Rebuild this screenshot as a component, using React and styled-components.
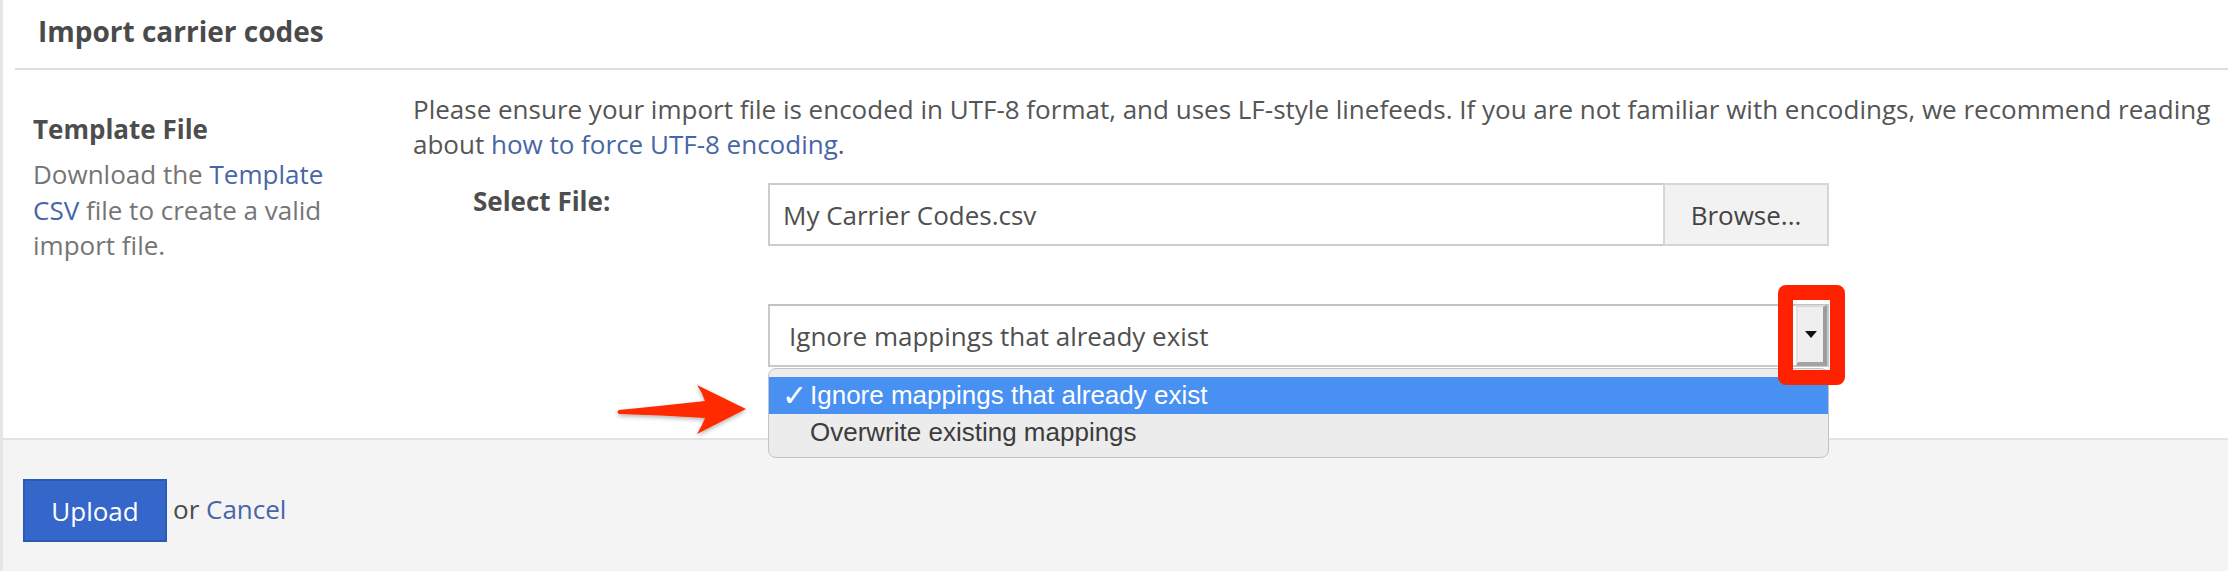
import React from "react";
import styled, { createGlobalStyle } from "styled-components";

const GlobalStyle = createGlobalStyle`
  html, body {
    margin: 0;
    padding: 0;
    background: #ffffff;
  }
  body {
    font-family: "Open Sans", "Liberation Sans", sans-serif;
    font-size: 26px;
    color: #555555;
  }
  * {
    box-sizing: border-box;
  }
`;

const Page = styled.div`
  width: 100%;
  height: 571px;
  border-left: 3px solid #e6e6e6;
  display: flex;
  flex-direction: column;
  overflow: hidden;
`;

const Header = styled.div`
  height: 70px;
  margin-left: 12px;
  padding: 12px 0 0 23px;
  border-bottom: 2px solid #dedede;
`;

const Title = styled.h1`
  margin: 0;
  font-size: 28px;
  line-height: 38px;
  font-weight: 700;
  color: #4a4a4a;
`;

const Body = styled.div`
  display: flex;
  padding: 0 10px 0 30px;
`;

const Aside = styled.div`
  width: 380px;
  flex-shrink: 0;
  padding-top: 41px;
`;

const AsideTitle = styled.div`
  font-weight: 700;
  color: #4d4d4d;
  line-height: 36px;
`;

const AsideText = styled.p`
  margin: 10px 0 0;
  max-width: 305px;
  line-height: 35.5px;
  color: #757575;
`;

const Link = styled.a`
  color: #4766a6;
  text-decoration: none;
`;

const Main = styled.div`
  flex: 1;
  padding: 22px 0 71px;
`;

const Intro = styled.p`
  margin: 0;
  line-height: 35px;
  color: #555555;
`;

const FieldRow = styled.div`
  display: flex;
  align-items: flex-start;
  margin-top: ${(p) => p.$gap}px;
`;

const FieldLabel = styled.div`
  width: 355px;
  flex-shrink: 0;
  padding-left: 60px;
  line-height: 36px;
  font-weight: 700;
  color: #4d4d4d;
`;

const FileGroup = styled.div`
  display: flex;
  height: 63px;
`;

const FileName = styled.div`
  width: 895px;
  display: flex;
  align-items: center;
  padding-left: 13px;
  border: 2px solid #cccccc;
  border-right: none;
  color: #4f4f4f;
`;

const BrowseButton = styled.button`
  width: 166px;
  border: 2px solid #d6d6d6;
  background: #f2f2f2;
  font-family: inherit;
  font-size: 26px;
  color: #444444;
  padding: 0;
`;

const SelectWrap = styled.div`
  position: relative;
  width: 1061px;
`;

const SelectBox = styled.div`
  height: 63px;
  display: flex;
  align-items: center;
  justify-content: space-between;
  padding: 0 0 0 19px;
  border: 2px solid #c9c9c9;
  border-top-color: #c2c2c2;
  background: #ffffff;
  color: #4f4f4f;
`;

const ArrowButton = styled.div`
  width: 31px;
  height: 61px;
  display: flex;
  align-items: center;
  justify-content: center;
  background: #efefef;
  border-top: 2px solid #d8d8d8;
  border-left: 2px solid #e2e2e2;
  border-right: 4px solid #9c9c9c;
  border-bottom: 4px solid #a3a3a3;

  &::after {
    content: "";
    border-left: 6px solid transparent;
    border-right: 6px solid transparent;
    border-top: 7px solid #111111;
  }
`;

const Dropdown = styled.div`
  position: absolute;
  z-index: 5;
  top: 64px;
  left: 0;
  width: 1061px;
  height: 90px;
  padding-top: 8px;
  background: #ececec;
  border: 1px solid #c3c3c3;
  border-radius: 8px;
  font-family: "Liberation Sans", Arial, sans-serif;
  font-size: 26px;
`;

const Option = styled.div`
  height: 37px;
  display: flex;
  align-items: center;
  padding-left: 13px;
  background: ${(p) => (p.$active ? "#4891f3" : "transparent")};
  color: ${(p) => (p.$active ? "#ffffff" : "#3c3c3c")};
`;

const Check = styled.span`
  width: 28px;
  font-family: "DejaVu Sans", sans-serif;
  font-size: 30px;
  line-height: 30px;
  font-weight: 700;
`;

const Callout = styled.div`
  position: absolute;
  z-index: 6;
  left: 1010px;
  top: -19px;
  width: 67px;
  height: 100px;
  border: 15px solid #ff2200;
  border-radius: 8px;
`;

const Pointer = styled.svg`
  position: absolute;
  z-index: 6;
  left: -158px;
  top: 76px;
  width: 145px;
  height: 62px;
  overflow: visible;
`;

const Footer = styled.div`
  flex: 1;
  display: flex;
  align-items: flex-start;
  padding: 39px 0 0 20px;
  background: #f4f4f4;
  border-top: 2px solid #e3e3e3;
`;

const UploadButton = styled.button`
  width: 144px;
  height: 63px;
  background: #3566ca;
  border: 2px solid #2d59b6;
  color: #ffffff;
  font-family: inherit;
  font-size: 26px;
  padding: 0;
`;

const FooterText = styled.span`
  margin-left: 6px;
  line-height: 60px;
  color: #4a4a4a;
`;

export default function App() {
  return (
    <>
      <GlobalStyle />
      <Page>
        <Header>
          <Title>Import carrier codes</Title>
        </Header>
        <Body>
          <Aside>
            <AsideTitle>Template File</AsideTitle>
            <AsideText>
              Download the <Link href="#">Template CSV</Link> file to create a valid import file.
            </AsideText>
          </Aside>
          <Main>
            <Intro>
              Please ensure your import file is encoded in UTF-8 format, and uses LF-style linefeeds. If you are not
              familiar with encodings, we recommend reading
              <br />
              about <Link href="#">how to force UTF-8 encoding</Link>.
            </Intro>
            <FieldRow $gap={21}>
              <FieldLabel>Select File:</FieldLabel>
              <FileGroup>
                <FileName>My Carrier Codes.csv</FileName>
                <BrowseButton>Browse...</BrowseButton>
              </FileGroup>
            </FieldRow>
            <FieldRow $gap={58}>
              <FieldLabel />
              <SelectWrap>
                <SelectBox>
                  Ignore mappings that already exist
                  <ArrowButton />
                </SelectBox>
                <Dropdown>
                  <Option $active>
                    <Check>✓</Check>Ignore mappings that already exist
                  </Option>
                  <Option>
                    <Check />Overwrite existing mappings
                  </Option>
                </Dropdown>
                <Callout />
                <Pointer viewBox="0 0 145 62">
                  <defs>
                    <filter id="shadow" x="-10%" y="-20%" width="130%" height="150%">
                      <feDropShadow dx="0" dy="2" stdDeviation="2" floodColor="#000" floodOpacity="0.3" />
                    </filter>
                  </defs>
                  <path
                    d="M9 30 Q50 26 95 21 Q92 12 87 5 L136 29 L87 54 Q92 46 95 38 Q50 35 9 34 Q6 32 9 30 Z"
                    fill="#ff2a00"
                    filter="url(#shadow)"
                  />
                </Pointer>
              </SelectWrap>
            </FieldRow>
          </Main>
        </Body>
        <Footer>
          <UploadButton>Upload</UploadButton>
          <FooterText>
            or <Link href="#">Cancel</Link>
          </FooterText>
        </Footer>
      </Page>
    </>
  );
}
